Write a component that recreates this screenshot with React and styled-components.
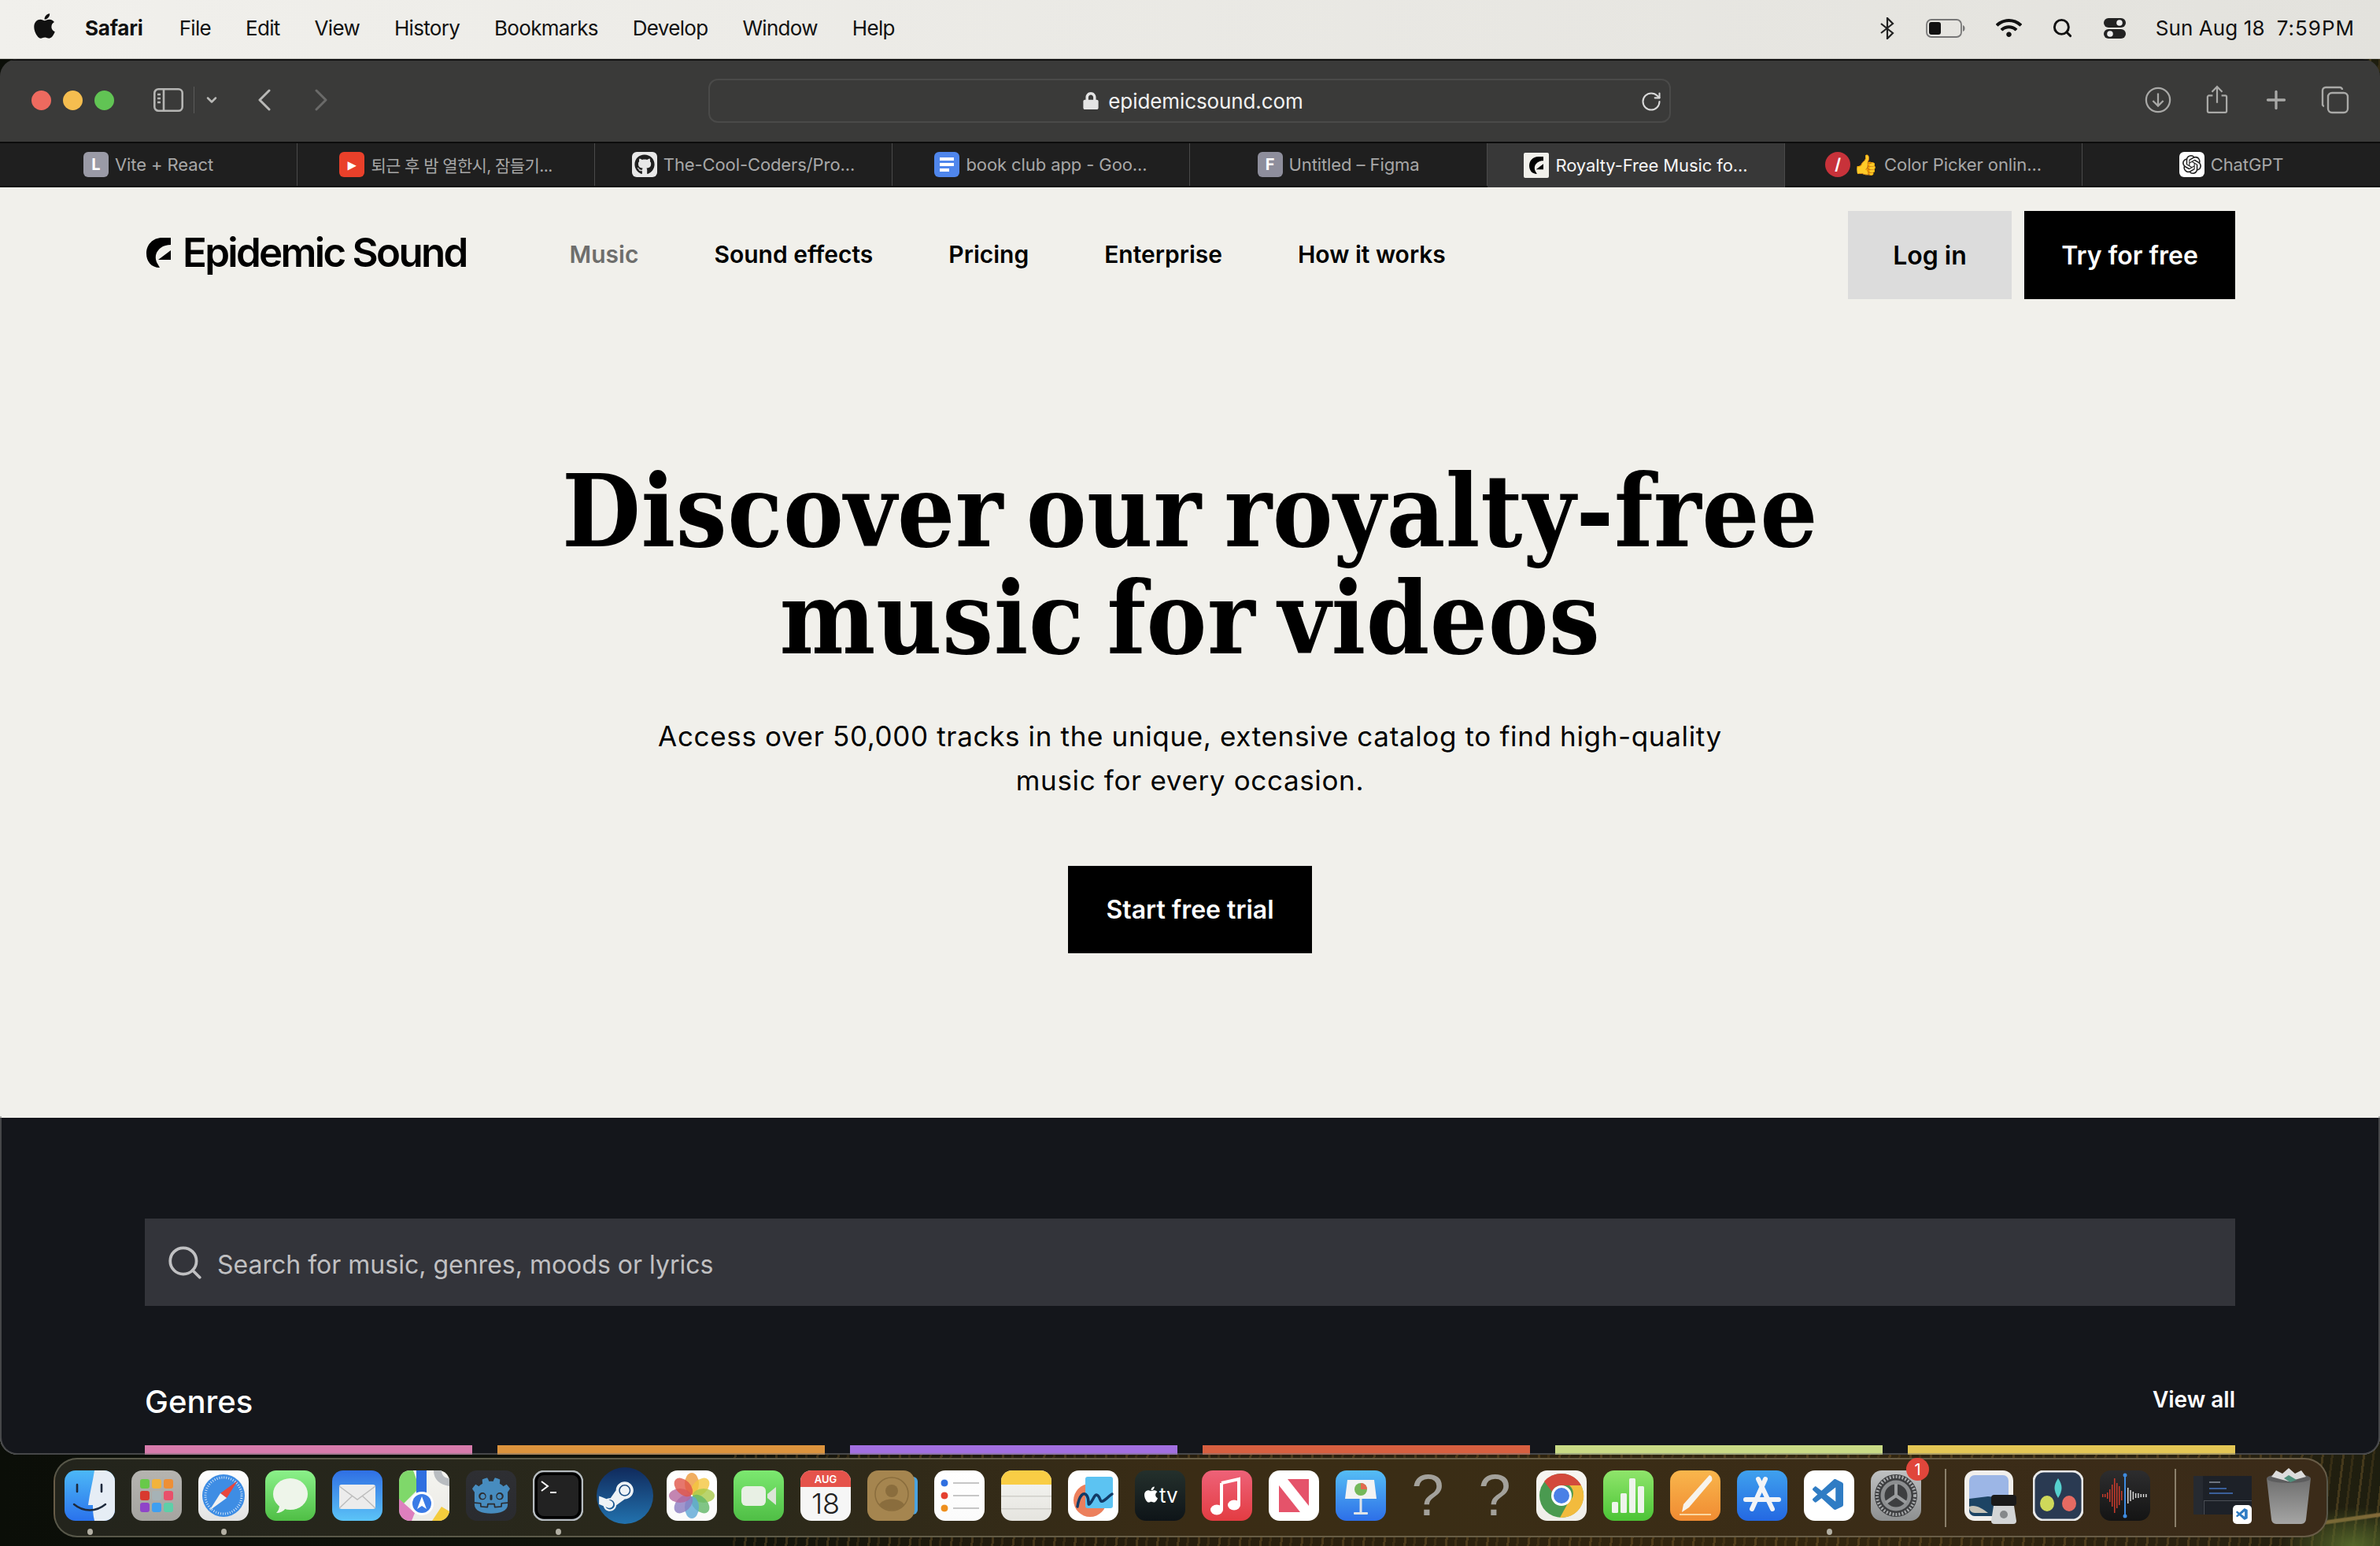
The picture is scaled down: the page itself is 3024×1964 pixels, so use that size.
import React from 'react';
import styled, { createGlobalStyle } from 'styled-components';
import { FaApple, FaGithub, FaLock, FaSteamSymbol, FaWifi } from 'react-icons/fa';
import { SiGodotengine, SiOpenai } from 'react-icons/si';
import { VscVscode } from 'react-icons/vsc';
import { ChevronDown, RotateCw, Search, Plus } from 'lucide-react';

const GlobalStyle = createGlobalStyle`
  html, body {
    margin: 0;
    padding: 0;
    background: #0c0f09;
  }
  * {
    box-sizing: border-box;
  }
`;

//desktop
const Screen = styled.div`
  position: relative;
  width: 3024px;
  height: 1964px;
  overflow: hidden;
  display: flex;
  flex-direction: column;
  font-family: Inter, 'Noto Sans', sans-serif;
  background:
    radial-gradient(ellipse 90px 50px at 2990px 1964px, #55662a 0%, transparent 100%),
    linear-gradient(172deg, transparent 1916px, #8a6a3c 1918px, #8a6a3c 1921px, transparent 1923px) no-repeat right / 100px 100%,
    repeating-linear-gradient(97deg, rgba(198, 150, 70, 0.22) 0 3px, transparent 3px 12px, rgba(120, 90, 40, 0.25) 12px 15px, transparent 15px 26px) no-repeat right / 2100px 100%,
    linear-gradient(90deg, #0b0e08 0%, #11130b 30%, #241c0d 45%, #33260f 75%, #2a2110 92%, #1e1e0f 100%);
`;

//menu bar
const MenuBar = styled.div`
  height: 75px;
  flex: none;
  display: flex;
  align-items: center;
  justify-content: space-between;
  padding: 0 32px 3px 41px;
  background: linear-gradient(90deg, #f1f0ec, #e3e2dd);
  border-bottom: 1px solid #c6c5c0;
  color: #111;
  font-size: 26px;
`;
const MenuLeft = styled.div`
  display: flex;
  align-items: center;
  gap: 44px;
  svg {
    width: 31px;
    height: 36px;
    margin: -6px -8px 0 0;
  }
`;
const MenuItem = styled.span`
  font-weight: ${p => (p.$bold ? 700 : 400)};
  letter-spacing: ${p => (p.$bold ? -0.2 : -0.7)}px;
  margin-right: ${p => (p.$bold ? 2 : 0)}px;
`;
const MenuRight = styled.div`
  display: flex;
  align-items: center;
`;
const Status = styled.span`
  display: flex;
  align-items: center;
  justify-content: center;
  width: ${p => p.$w}px;
  margin-right: ${p => p.$mr}px;
`;
const Clock = styled.span`
  display: flex;
  gap: 15px;
  font-size: 26px;
  letter-spacing: 0.1px;
`;
const ClockTime = styled.span`
  letter-spacing: 1px;
`;

//browser window
const Win = styled.div`
  position: relative;
  height: 1773px;
  flex: none;
  display: flex;
  flex-direction: column;
  overflow: hidden;
  border-radius: 22px;
  &::after {
    content: '';
    position: absolute;
    left: 0;
    right: 0;
    bottom: 0;
    height: 428px;
    border-radius: 0 0 22px 22px;
    border: 2px solid rgba(120, 120, 120, 0.5);
    border-top: none;
    pointer-events: none;
  }
`;
const Toolbar = styled.div`
  position: relative;
  height: 105px;
  flex: none;
  display: flex;
  align-items: center;
  padding-bottom: 3px;
  background: #3a3a39;
  border-top: 2px solid #111;
`;
const Lights = styled.div`
  display: flex;
  gap: 15px;
  margin-left: 40px;
`;
const Light = styled.span`
  width: 25px;
  height: 25px;
  border-radius: 50%;
  background: ${p => p.$c};
`;
const ToolIcons = styled.div`
  display: flex;
  align-items: center;
  margin-left: 50px;
  color: #b9b9b7;
`;
const ToolDivider = styled.span`
  width: 1px;
  height: 34px;
  margin: 0 12px 0 13px;
  background: #5b5b5a;
`;
const HistoryArrow = styled.svg`
  width: 18px;
  height: 28px;
  margin-left: ${p => p.$ml}px;
  fill: none;
  stroke: ${p => p.$c};
  stroke-width: 3;
  stroke-linecap: round;
  stroke-linejoin: round;
`;
const AddressBar = styled.div`
  position: absolute;
  left: 900px;
  top: 23px;
  width: 1223px;
  height: 56px;
  border: 2px solid #4a4a49;
  border-radius: 12px;
  display: flex;
  align-items: center;
  justify-content: center;
  gap: 11px;
  padding-left: 8px;
  color: #f2f2f2;
  font-size: 26px;
  letter-spacing: -0.1px;
`;
const Reload = styled.span`
  position: absolute;
  right: 9px;
  top: 13px;
  display: flex;
  color: #d8d8d8;
`;
const ToolRight = styled.div`
  position: absolute;
  top: 0;
  bottom: 3px;
  right: 20px;
  display: flex;
  align-items: center;
  color: #a9a9a7;
`;
const ToolButton = styled.span`
  width: 75px;
  display: flex;
  justify-content: center;
`;

//tabs
const TabBar = styled.div`
  height: 58px;
  flex: none;
  display: grid;
  grid-template-columns: repeat(8, 1fr);
  background: #1f1f1f;
  border-top: 2px solid #0c0c0c;
  border-bottom: 2px solid #0c0c0c;
`;
const Tab = styled.div`
  display: flex;
  align-items: center;
  justify-content: center;
  gap: 8px;
  font-size: 22px;
  white-space: nowrap;
  font-family: Inter, 'Noto Sans CJK KR', sans-serif;
  color: ${p => (p.$active ? '#f5f5f5' : '#a7a7a7')};
  background: ${p => (p.$active ? '#383838' : 'transparent')};
  border-right: 1px solid #4a4a4a;
  margin-bottom: ${p => (p.$active ? '-2px' : '0')};
  &:last-child {
    border-right: none;
  }
`;
const TabTitle = styled.span`
  font-size: ${p => (p.$cjk ? 21 : 22)}px;
  letter-spacing: ${p => (p.$cjk ? -0.6 : -0.1)}px;
`;
const Favicon = styled.span`
  width: 32px;
  height: 32px;
  flex: none;
  border-radius: ${p => p.$r || 6}px;
  background: ${p => p.$bg};
  color: ${p => p.$c || '#fff'};
  display: flex;
  align-items: center;
  justify-content: center;
  font-size: 20px;
  font-weight: 700;
`;
const MiniMark = styled.span`
  display: flex;
  svg {
    width: 18px;
    height: 22px;
  }
`;
const Thumb = styled.span`
  font-size: 25px;
  line-height: 30px;
  margin-left: -4px;
`;

//page
const Page = styled.div`
  flex: 1;
  min-height: 0;
  display: flex;
  flex-direction: column;
  background: #f1f0eb;
  color: #000;
`;
const Header = styled.header`
  height: 173px;
  flex: none;
  display: flex;
  align-items: flex-start;
  padding: 30px 184px 0 186px;
`;
const Logo = styled.div`
  display: flex;
  align-items: center;
  gap: 15px;
  margin: 23px 131px 0 0;
  svg {
    width: 31px;
    height: 38px;
  }
`;
const LogoText = styled.span`
  font-size: 51px;
  font-weight: 600;
  line-height: 60px;
  letter-spacing: -2.7px;
`;
const Nav = styled.nav`
  display: flex;
  gap: 96px;
  margin-top: 35px;
  flex: 1;
`;
const NavLink = styled.a`
  font-size: 30px;
  line-height: 40px;
  font-weight: 600;
  color: ${p => (p.$muted ? '#6e6e6c' : '#000')};
`;
const HeaderButtons = styled.div`
  display: flex;
  gap: 16px;
`;
const Button = styled.button`
  height: ${p => (p.$hero ? 111 : 112)}px;
  width: ${p => p.$w}px;
  border: none;
  border-radius: 0;
  background: ${p => (p.$light ? '#dcdcdc' : '#000')};
  color: ${p => (p.$light ? '#000' : '#fff')};
  font-family: Inter, sans-serif;
  font-size: 32px;
  font-weight: 600;
`;
const Hero = styled.section`
  flex: 1;
  display: flex;
  flex-direction: column;
  align-items: center;
  padding-top: 170px;
`;
const Title = styled.h1`
  margin: 0;
  text-align: center;
  font-family: 'DejaVu Serif Condensed', 'DejaVu Serif', serif;
  font-size: 128px;
  line-height: 136px;
  font-weight: 700;
  letter-spacing: 0.6px;
  word-spacing: -12px;
`;
const Lead = styled.p`
  margin: 54px 0 81px;
  width: 1400px;
  text-align: center;
  font-size: 35px;
  line-height: 56px;
  letter-spacing: 0.65px;
`;
const Dark = styled.section`
  flex: none;
  height: 428px;
  background: #14161b;
  padding: 128px 184px 0;
  color: #fff;
`;
const SearchBox = styled.div`
  height: 111px;
  display: flex;
  align-items: center;
  gap: 16px;
  padding-left: 26px;
  background: #33343a;
  color: #c0c0c2;
  font-size: 32px;
`;
const SearchText = styled.span`
  margin-top: 5px;
`;
const SectionRow = styled.div`
  display: flex;
  align-items: center;
  justify-content: space-between;
  height: 48px;
  margin: 97px 0 32px;
`;
const SectionTitle = styled.h2`
  margin: 0;
  font-size: 40px;
  font-weight: 500;
`;
const ViewAll = styled.a`
  margin-top: -5px;
  font-size: 28px;
  font-weight: 600;
`;
const Genres = styled.div`
  display: grid;
  grid-template-columns: repeat(6, 1fr);
  gap: 32px;
`;
const Genre = styled.div`
  height: 120px;
  background: ${p => p.$c};
`;

//dock
const Dock = styled.div`
  position: absolute;
  left: 68px;
  top: 1852px;
  width: 2890px;
  height: 101px;
  display: flex;
  align-items: center;
  border-radius: 30px;
  border: 2px solid rgba(210, 205, 180, 0.3);
  background: linear-gradient(90deg, #23241c 0%, #2b291b 30%, #3a2c15 50%, #3a2d15 60%, #3b2b19 100%);
  padding: 0 0 0 12px;
`;
const Slot = styled.div`
  position: relative;
  flex: none;
  width: ${p => p.$w || 64}px;
  height: 64px;
  margin-right: ${p => (p.$mr === undefined ? 21 : p.$mr)}px;
  margin-top: -5px;
  display: flex;
  align-items: ${p => (p.$start ? 'flex-start' : 'center')};
  justify-content: center;
  svg {
    display: block;
    flex: none;
  }
`;
const Dot = styled.span`
  position: absolute;
  left: 29px;
  top: 74px;
  width: 7px;
  height: 8px;
  border-radius: 50%;
  background: #b3b0a4;
`;
const DockDivider = styled.span`
  flex: none;
  width: 2px;
  height: 74px;
  margin: 0 ${p => p.$r}px 0 ${p => p.$l}px;
  background: #8a7f6a;
`;
const Unknown = styled.span`
  font-family: 'Liberation Sans', sans-serif;
  font-size: 74px;
  line-height: 64px;
  color: #a3a19b;
`;
const Badge = styled.span`
  position: absolute;
  top: -16px;
  right: -10px;
  width: 29px;
  height: 29px;
  border-radius: 50%;
  background: #e0463b;
  color: #fff;
  font-size: 20px;
  display: flex;
  align-items: center;
  justify-content: center;
`;

const Rounded = ({ id, from, to, fill }) => (
  <>
    <defs>
      <linearGradient id={id} x1='0' y1='0' x2='0' y2='1'>
        <stop offset='0' stopColor={from} />
        <stop offset='1' stopColor={to} />
      </linearGradient>
    </defs>
    <rect width='64' height='64' rx='14' fill={fill || `url(#${id})`} />
  </>
);

const Icon = ({ children, w = 64, h = 64 }) => (
  <svg width={w} height={h} viewBox={`0 0 ${w} ${h}`}>
    {children}
  </svg>
);

const Finder = () => (
  <Icon>
    <Rounded id='fi' from='#4cb8f7' to='#2a72ec' />
    <path d='M38 0H50a14 14 0 0 1 14 14V50a14 14 0 0 1-14 14H38C36 56 36 50 36 44H30C32 28 36 14 38 0Z' fill='#e6edf5' />
    <path d='M16 18v9M47 18v9' stroke='#1d2a3d' strokeWidth='2.6' strokeLinecap='round' />
    <path d='M12 43c12 10 28 10 40 0' stroke='#1d2a3d' strokeWidth='2.4' fill='none' strokeLinecap='round' />
  </Icon>
);
const Launchpad = () => (
  <Icon>
    <Rounded id='la' from='#b5b4b0' to='#a5a4a0' />
    {['#68c94a', '#f2b33c', '#ee8f35', '#d8392f', '#a6b2b6', '#e9506a', '#8f45c8', '#3f9ff0', '#5ecfa8'].map((c, i) => (
      <rect key={c} x={11 + (i % 3) * 15} y={11 + Math.floor(i / 3) * 15} width='12' height='12' rx='3' fill={c} />
    ))}
  </Icon>
);
const Safari = () => (
  <Icon>
    <Rounded id='sa' from='#fff' to='#e2e2e2' />
    <circle cx='32' cy='32' r='27' fill='#3e8de4' />
    <circle cx='32' cy='32' r='23' fill='none' stroke='#cfe3f8' strokeWidth='3' strokeDasharray='1 2' />
    <path d='M50 13L28 29l8 6z' fill='#e8463c' />
    <path d='M14 51l22-16-8-6z' fill='#f1f1f1' />
  </Icon>
);
const Messages = () => (
  <Icon>
    <Rounded id='me' from='#8bf18a' to='#4fbe45' />
    <ellipse cx='32' cy='30' rx='22' ry='20' fill='#eef5ea' />
    <path d='M18 44c0 5-2 8-4 10 5 0 9-2 12-6z' fill='#eef5ea' />
  </Icon>
);
const Mail = () => (
  <Icon>
    <Rounded id='ma' from='#2f6fe4' to='#5cc4f7' />
    <rect x='9' y='18' width='46' height='31' rx='3' fill='#ececec' />
    <path d='M9 20l23 17 23-17M9 48l17-16M55 48L38 32' stroke='#bdbdbd' strokeWidth='1.5' fill='none' />
  </Icon>
);
const Maps = () => (
  <Icon>
    <Rounded id='mp' from='#f4f4f0' to='#ecebe6' />
    <path d='M0 14A14 14 0 0 1 14 0H18L26 22 0 48z' fill='#7fd86a' />
    <path d='M0 36L20 54 16 64H14A14 14 0 0 1 0 50z' fill='#dd7fbe' />
    <path d='M42 64L54 46 64 52A14 14 0 0 1 50 64z' fill='#f4cc3c' />
    <rect x='22' y='0' width='13' height='34' fill='#2f6fe0' />
    <path d='M44 0c0 12 8 18 20 20V10C58 10 54 6 54 0z' fill='#b8bcc0' />
    <circle cx='29' cy='42' r='15' fill='#fff' />
    <circle cx='29' cy='42' r='12' fill='#3a7be6' />
    <path d='M29 33l-6 16 6-4 6 4z' fill='#fff' />
  </Icon>
);
const Godot = () => (
  <Icon>
    <Rounded id='go' from='#2e2f33' to='#2a2b2f' />
    <g transform='translate(8 8)'>
      <SiGodotengine size={48} color='#478cbf' />
    </g>
  </Icon>
);
const Terminal = () => (
  <Icon>
    <rect x='1' y='1' width='62' height='62' rx='13' fill='#000' stroke='#b6bcc0' strokeWidth='2.5' />
    <rect x='6' y='6' width='52' height='52' rx='8' fill='#222' />
    <path d='M11 14l8 6-8 6' stroke='#fff' strokeWidth='2' fill='none' />
    <path d='M22 28h8' stroke='#fff' strokeWidth='2' />
  </Icon>
);
const Steam = () => (
  <Icon w={72} h={72}>
    <defs>
      <linearGradient id='st' x1='0' y1='0' x2='0' y2='1'>
        <stop offset='0' stopColor='#102a5c' />
        <stop offset='1' stopColor='#2272ae' />
      </linearGradient>
    </defs>
    <circle cx='36' cy='36' r='36' fill='url(#st)' />
    <g transform='translate(0 12)'>
      <FaSteamSymbol size={50} color='#eef3f6' x='0' y='0' />
    </g>
  </Icon>
);
const Photos = () => (
  <Icon>
    <Rounded id='ph' from='#fff' to='#fafafa' />
    {['#ee9a3a', '#f4c63e', '#a8c94a', '#62b768', '#5da7d6', '#8a7cc0', '#b4669e', '#e05548'].map((c, i) => (
      <ellipse key={c} cx='32' cy='17' rx='9' ry='14' fill={c} opacity='0.8' transform={`rotate(${i * 45} 32 32)`} />
    ))}
  </Icon>
);
const FaceTime = () => (
  <Icon>
    <Rounded id='ft' from='#7ce870' to='#4fbe45' />
    <rect x='10' y='20' width='31' height='25' rx='6' fill='#e8f0e4' />
    <path d='M43 30l11-9v23l-11-9z' fill='#dbe5d7' />
  </Icon>
);
const Calendar = () => (
  <Icon>
    <Rounded id='ca' fill='#f6f6f6' from='#fff' to='#fff' />
    <path d='M0 21V14A14 14 0 0 1 14 0H50A14 14 0 0 1 64 14V21z' fill='#e5534b' />
    <text x='32' y='16' textAnchor='middle' fontFamily='Inter' fontSize='13' fontWeight='600' fill='#fff'>AUG</text>
    <text x='32' y='55' textAnchor='middle' fontFamily='Inter' fontSize='36' fontWeight='300' fill='#222'>18</text>
  </Icon>
);
const Contacts = () => (
  <Icon>
    <rect x='50' y='8' width='14' height='48' rx='6' fill='#4aa3e0' />
    <rect width='60' height='64' rx='14' fill='#a5854f' />
    <circle cx='31' cy='30' r='21' fill='none' stroke='#8a6d3d' strokeWidth='1.5' />
    <circle cx='31' cy='26' r='8' fill='#8a6d3d' />
    <path d='M15 44c4-10 28-10 32 0-8 8-24 8-32 0z' fill='#8a6d3d' />
  </Icon>
);
const Reminders = () => (
  <Icon>
    <Rounded id='re' from='#fff' to='#fbfbfb' />
    {['#2f6fe0', '#e5402f', '#ee8f1e'].map((c, i) => (
      <g key={c}>
        <circle cx='13' cy={16 + i * 16} r='5' fill={c} stroke='#fff' strokeWidth='1' />
        <rect x='24' y={15 + i * 16} width='33' height='2' fill='#c6c6c6' />
      </g>
    ))}
  </Icon>
);
const Notes = () => (
  <Icon>
    <Rounded id='no' from='#f6f6f3' to='#e5e4df' />
    <path d='M0 18V14A14 14 0 0 1 14 0H50A14 14 0 0 1 64 14V18z' fill='#f9cd45' />
    <rect y='32' width='64' height='1.5' fill='#d0cfca' />
    <rect y='48' width='64' height='1.5' fill='#d0cfca' />
  </Icon>
);
const Freeform = () => (
  <Icon>
    <Rounded id='fr' from='#fff' to='#fff' />
    <circle cx='28' cy='38' r='21' fill='#ec7f5c' />
    <rect x='22' y='8' width='35' height='40' rx='3' fill='#5cc3f2' />
    <path d='M12 46c2-14 8-20 12-14s0 14 4 10 6-14 10-10 2 10 8 6 6-6 10-8' stroke='#123a66' strokeWidth='3.5' fill='none' strokeLinecap='round' />
  </Icon>
);
const AppleTv = () => (
  <Icon>
    <Rounded id='tv' from='#24302c' to='#0e1418' />
    <g transform='translate(9 19)'>
      <FaApple size={23} color='#fff' />
    </g>
    <text x='31' y='41' fontFamily='Inter' fontSize='26' fontWeight='400' fill='#fff'>tv</text>
  </Icon>
);
const Music = () => (
  <Icon>
    <Rounded id='mu' from='#ee6278' to='#e33c42' />
    <path d='M25 16l22-5v32' fill='none' stroke='#fff' strokeWidth='4' />
    <path d='M25 16v34' stroke='#fff' strokeWidth='4' />
    <ellipse cx='19' cy='50' rx='8' ry='6.5' fill='#fff' />
    <ellipse cx='41' cy='44' rx='8' ry='6.5' fill='#fff' />
  </Icon>
);
const News = () => (
  <Icon>
    <Rounded id='ne' from='#fff' to='#fff' />
    <rect x='13' y='11' width='38' height='42' fill='#e5536a' />
    <path d='M13 11h11l27 34v8H40L13 19z' fill='#fff' />
  </Icon>
);
const Keynote = () => (
  <Icon>
    <Rounded id='ke' from='#55bdf5' to='#2d6fe8' />
    <path d='M15 12h34l3 24H12z' fill='#f3f3f3' />
    <circle cx='32' cy='24' r='8' fill='#75b85a' />
    <path d='M32 24V16a8 8 0 0 1 8 8z' fill='#e36a4f' />
    <rect x='30.5' y='36' width='3' height='18' fill='#dfe3e8' />
    <rect x='23' y='53' width='18' height='3' rx='1' fill='#dfe3e8' />
  </Icon>
);
const Chrome = () => (
  <Icon>
    <Rounded id='ch' from='#f7f6f2' to='#efeee9' />
    <circle cx='32' cy='32' r='28' fill='#4a9a50' />
    <path d='M32 4a28 28 0 0 1 25 15H32A13 13 0 0 0 20 27L10 14A28 28 0 0 1 32 4z' fill='#d34a3c' />
    <path d='M57 19a28 28 0 0 1-27 41l11-20A13 13 0 0 0 42 19z' fill='#f2bb3d' />
    <circle cx='32' cy='32' r='13' fill='#fff' />
    <circle cx='32' cy='32' r='10' fill='#4a80e6' />
  </Icon>
);
const Numbers = () => (
  <Icon>
    <Rounded id='nu' from='#8fe56b' to='#4cc436' />
    {[[11, 40], [22, 29], [33, 10], [44, 20]].map(([x, y]) => (
      <rect key={x} x={x} y={y} width='8' height={54 - y} rx='1.5' fill='#eef4ec' />
    ))}
  </Icon>
);
const Pages = () => (
  <Icon>
    <Rounded id='pa' from='#f9b64c' to='#f08b32' />
    <path d='M50 6c3 1 4 4 3 7L24 47l-9 6 2-10z' fill='#f7f3ec' />
    <rect x='12' y='55' width='40' height='2' fill='#fbd7a0' />
  </Icon>
);
const AppStore = () => (
  <Icon>
    <Rounded id='ap' from='#3fa1ee' to='#2468e2' />
    <path d='M36 11L19 49M27 11l18 38M11 37h42' stroke='#f2f4f7' strokeWidth='6' strokeLinecap='round' fill='none' />
  </Icon>
);
const VsCode = () => (
  <Icon>
    <Rounded id='vs' from='#fff' to='#fff' />
    <g transform='translate(8 8)'>
      <VscVscode size={48} color='#2f7cc4' />
    </g>
  </Icon>
);
const SystemPrefs = () => (
  <Icon>
    <Rounded id='sy' from='#bfc1c2' to='#8d8f90' />
    <circle cx='32' cy='32' r='27' fill='#3d3e40' />
    <circle cx='32' cy='32' r='24' fill='none' stroke='#a9abad' strokeWidth='4' strokeDasharray='2 2' />
    <circle cx='32' cy='32' r='17' fill='none' stroke='#8c8e90' strokeWidth='5' />
    <path d='M32 32V17M32 32L19 41M32 32l13 9' stroke='#9a9c9e' strokeWidth='4' />
  </Icon>
);
const Preview = () => (
  <Icon w={68} h={68}>
    <rect x='0' y='0' width='62' height='64' rx='13' fill='#f1efec' />
    <rect x='6' y='6' width='50' height='52' rx='7' fill='#9cb6e6' />
    <path d='M6 36l24-3 26 3v15a7 7 0 0 1-7 7H13a7 7 0 0 1-7-7z' fill='#1d4464' />
    <path d='M6 46c8-3 16 2 24 8H13a7 7 0 0 1-7-7z' fill='#c6c3b8' />
    <rect x='34' y='31' width='32' height='14' rx='4' fill='#1a1a1a' />
    <path d='M37 45h26l3 19a4 4 0 0 1-4 4H38a4 4 0 0 1-4-4z' fill='#d3d5d6' />
    <circle cx='50' cy='56' r='5' fill='#85888a' />
  </Icon>
);
const Davinci = () => (
  <Icon>
    <rect x='1' y='1' width='62' height='62' rx='13' fill='#2a3a52' stroke='#e8e8e8' strokeWidth='3' />
    <path d='M32 10c6 9 6 15 0 25-6-10-6-16 0-25z' fill='#55d0cd' />
    <ellipse cx='18' cy='42' rx='9' ry='10' fill='#cfd85a' />
    <ellipse cx='46' cy='42' rx='9' ry='10' fill='#e66a62' />
  </Icon>
);
const VoiceMemos = () => (
  <Icon>
    <Rounded id='vo' from='#2d2d2e' to='#141414' />
    {[2, 2, 4, 8, 14, 22, 16, 12, 6].map((h, i) => (
      <rect key={i} x={3 + i * 3} y={32 - h} width='1.5' height={h * 2} fill='#c83a2c' />
    ))}
    {[10, 7, 5, 3, 3, 2, 2, 2].map((h, i) => (
      <rect key={i} x={35 + i * 3.3} y={32 - h} width='1.5' height={h * 2} fill='#d8d8d8' />
    ))}
    <rect x='31' y='5' width='2' height='54' fill='#3d8be0' />
    <circle cx='32' cy='6' r='2.5' fill='#3d8be0' />
    <circle cx='32' cy='58' r='2.5' fill='#3d8be0' />
  </Icon>
);
const WindowThumb = () => (
  <Icon w={76} h={68}>
    <rect x='0' y='7' width='74' height='49' fill='#1d2128' />
    <rect x='0' y='7' width='12' height='49' fill='#262a31' />
    <rect x='20' y='14' width='14' height='2' fill='#6e7580' />
    <rect x='20' y='22' width='22' height='2' fill='#3a5f9a' />
    <rect x='20' y='28' width='30' height='2' fill='#3a5f9a' />
    <rect x='13' y='38' width='61' height='1' fill='#4b4f56' />
    <rect x='13' y='38' width='1' height='18' fill='#4b4f56' />
    <rect x='50' y='44' width='24' height='24' rx='5' fill='#fff' />
    <g transform='translate(53 47)'>
      <VscVscode size={18} color='#2f7cc4' />
    </g>
  </Icon>
);
const Trash = () => (
  <Icon w={60} h={72}>
    <defs>
      <linearGradient id='tr' x1='0' y1='0' x2='0' y2='1'>
        <stop offset='0' stopColor='#6f6f6f' />
        <stop offset='1' stopColor='#a5a5a4' />
      </linearGradient>
    </defs>
    <path d='M2 14h56l-6 52a6 6 0 0 1-6 6H14a6 6 0 0 1-6-6z' fill='url(#tr)' />
    <ellipse cx='30' cy='14' rx='28' ry='6' fill='#5d5d5e' />
    <path d='M8 12l6-8 8 4 8-7 8 7 8-4 6 8-22 6z' fill='#dcdcdc' />
    <path d='M24 14l6-4 10 6-8 3z' fill='#4f8f7c' />
  </Icon>
);

const SidebarGlyph = () => (
  <svg width='38' height='30' viewBox='0 0 38 30' fill='none' stroke='#b5b5b3' strokeWidth='2.6'>
    <rect x='1.3' y='1.3' width='35.4' height='27.4' rx='5' />
    <path d='M13 2v26' />
    <path d='M5 8h4M5 13h4M5 18h4' />
  </svg>
);
const DownloadGlyph = () => (
  <svg width='34' height='34' viewBox='0 0 36 36' fill='none' stroke='#a9a9a7' strokeWidth='2.4'>
    <circle cx='18' cy='18' r='16' />
    <path d='M18 9v17M11 19l7 7 7-7' />
  </svg>
);
const ShareGlyph = () => (
  <svg width='28' height='38' viewBox='0 0 30 38' fill='none' stroke='#a9a9a7' strokeWidth='2.4'>
    <path d='M9 13H4a2 2 0 0 0-2 2v19a2 2 0 0 0 2 2h22a2 2 0 0 0 2-2V15a2 2 0 0 0-2-2h-5' />
    <path d='M15 23V2M8 8l7-7 7 7' />
  </svg>
);
const TabsGlyph = () => (
  <svg width='36' height='36' viewBox='0 0 36 36' fill='none' stroke='#a9a9a7' strokeWidth='2.4'>
    <rect x='9' y='9' width='25' height='25' rx='5' />
    <path d='M4 26a2.5 2.5 0 0 1-2-3V6a4 4 0 0 1 4-4h18a3 3 0 0 1 3 3' />
  </svg>
);
const BluetoothGlyph = () => (
  <svg width='20' height='28' viewBox='0 0 20 28' fill='none' stroke='#222' strokeWidth='2.2'>
    <path d='M2 8l15 12-7 7V1l7 7L2 20' />
  </svg>
);
const BatteryGlyph = () => (
  <svg width='50' height='24' viewBox='0 0 50 24'>
    <rect x='1' y='1' width='44' height='22' rx='6' fill='none' stroke='#777' strokeWidth='1.8' />
    <rect x='4' y='4' width='15' height='16' rx='3' fill='#111' />
    <path d='M47 8c2 1 2.5 2 2.5 4s-.5 3-2.5 4z' fill='#777' />
  </svg>
);
const ControlGlyph = () => (
  <svg width='28' height='26' viewBox='0 0 28 26'>
    <rect x='0' y='0' width='28' height='12' rx='6' fill='#222' />
    <circle cx='20' cy='6' r='3.8' fill='#eee' />
    <rect x='0' y='14' width='28' height='12' rx='6' fill='#222' />
    <circle cx='8' cy='20' r='3.8' fill='#eee' />
  </svg>
);
const DocsGlyph = () => (
  <svg width='30' height='30' viewBox='0 0 30 30' fill='#fff'>
    <rect x='6' y='6' width='18' height='4' />
    <rect x='6' y='13' width='18' height='4' />
    <rect x='6' y='20' width='12' height='4' />
  </svg>
);
const LogoMark = () => (
  <svg viewBox='0 0 31 38' fill='currentColor'>
    <path d='M31 0H20C8 0 0 9 0 20c0 10 6 18 17 18l-4-7c-3-8 0-14 5-18 4-3 8-4 13-4z' />
    <path d='M15 28L31 16v12z' />
  </svg>
);

const menuItems = ['File', 'Edit', 'View', 'History', 'Bookmarks', 'Develop', 'Window', 'Help'];
const navLinks = ['Sound effects', 'Pricing', 'Enterprise', 'How it works'];
const genreColors = ['#d77bac', '#dc933d', '#a26fe0', '#d75f40', '#c9da85', '#e3c655'];

const tabs = [
  { title: 'Vite + React', icon: <Favicon $bg='#9a9aa6'>L</Favicon> },
  { title: '퇴근 후 밤 열한시, 잠들기...', cjk: true, icon: <Favicon $bg='#e9402a'>▸</Favicon> },
  { title: 'The-Cool-Coders/Pro...', icon: <Favicon $bg='#e8e8e8' $c='#1f1f1f'><FaGithub size={26} /></Favicon> },
  { title: 'book club app - Goo...', icon: <Favicon $bg='#4f86ec'><DocsGlyph /></Favicon> },
  { title: 'Untitled – Figma', icon: <Favicon $bg='#8e8e9c'>F</Favicon> },
  { title: 'Royalty-Free Music fo...', active: true, icon: <Favicon $bg='#f1f0eb' $c='#000' $r={2}><MiniMark><LogoMark /></MiniMark></Favicon> },
  { title: 'Color Picker onlin...', icon: <><Favicon $bg='#c8323a' $r={16}>/</Favicon><Thumb>👍</Thumb></> },
  { title: 'ChatGPT', icon: <Favicon $bg='#fff' $c='#222'><SiOpenai size={24} /></Favicon> },
];

const dockApps = [
  { Glyph: Finder, dot: true }, { Glyph: Launchpad }, { Glyph: Safari, dot: true }, { Glyph: Messages },
  { Glyph: Mail }, { Glyph: Maps }, { Glyph: Godot }, { Glyph: Terminal, dot: true }, { Glyph: Steam },
  { Glyph: Photos }, { Glyph: FaceTime }, { Glyph: Calendar }, { Glyph: Contacts }, { Glyph: Reminders },
  { Glyph: Notes }, { Glyph: Freeform }, { Glyph: AppleTv }, { Glyph: Music }, { Glyph: News }, { Glyph: Keynote },
];
const dockAppsAfter = [
  { Glyph: Chrome }, { Glyph: Numbers }, { Glyph: Pages }, { Glyph: AppStore }, { Glyph: VsCode, dot: true },
];

const App = () => {
  return (
    <Screen>
      <GlobalStyle />
      <MenuBar>
        <MenuLeft>
          <FaApple />
          <MenuItem $bold>Safari</MenuItem>
          {menuItems.map(item => (
            <MenuItem key={item}>{item}</MenuItem>
          ))}
        </MenuLeft>
        <MenuRight>
          <Status $w={22} $mr={38}><BluetoothGlyph /></Status>
          <Status $w={50} $mr={38}><BatteryGlyph /></Status>
          <Status $w={36} $mr={36}><FaWifi size={33} /></Status>
          <Status $w={28} $mr={38}><Search size={27} strokeWidth={2.6} /></Status>
          <Status $w={28} $mr={38}><ControlGlyph /></Status>
          <Clock><span>Sun Aug 18</span><ClockTime>7:59PM</ClockTime></Clock>
        </MenuRight>
      </MenuBar>

      <Win>
        <Toolbar>
          <Lights>
            <Light $c='#ee6a5f' />
            <Light $c='#f5bd4f' />
            <Light $c='#61c454' />
          </Lights>
          <ToolIcons>
            <SidebarGlyph />
            <ToolDivider />
            <ChevronDown size={20} strokeWidth={3} />
            <HistoryArrow viewBox='0 0 18 28' $ml={48} $c='#b9b9b7'><path d='M15 2L3 14l12 12' /></HistoryArrow>
            <HistoryArrow viewBox='0 0 18 28' $ml={54} $c='#6a6a69'><path d='M3 2l12 12L3 26' /></HistoryArrow>
          </ToolIcons>
          <AddressBar>
            <FaLock size={22} color='#e4e4e4' />
            <span>epidemicsound.com</span>
            <Reload><RotateCw size={28} strokeWidth={1.8} /></Reload>
          </AddressBar>
          <ToolRight>
            <ToolButton><DownloadGlyph /></ToolButton>
            <ToolButton><ShareGlyph /></ToolButton>
            <ToolButton><Plus size={36} strokeWidth={2.2} /></ToolButton>
            <ToolButton><TabsGlyph /></ToolButton>
          </ToolRight>
        </Toolbar>
        <TabBar>
          {tabs.map(tab => (
            <Tab key={tab.title} $active={tab.active}>
              {tab.icon}
              <TabTitle $cjk={tab.cjk}>{tab.title}</TabTitle>
            </Tab>
          ))}
        </TabBar>
        <Page>
          <Header>
            <Logo>
              <LogoMark />
              <LogoText>Epidemic Sound</LogoText>
            </Logo>
            <Nav>
              <NavLink $muted>Music</NavLink>
              {navLinks.map(link => (
                <NavLink key={link}>{link}</NavLink>
              ))}
            </Nav>
            <HeaderButtons>
              <Button $light $w={208}>Log in</Button>
              <Button $w={268}>Try for free</Button>
            </HeaderButtons>
          </Header>
          <Hero>
            <Title>
              Discover our royalty-free
              <br />
              music for videos
            </Title>
            <Lead>
              Access over 50,000 tracks in the unique, extensive catalog to find high-quality music for every occasion.
            </Lead>
            <Button $hero $w={310}>Start free trial</Button>
          </Hero>
          <Dark>
            <SearchBox>
              <Search size={50} strokeWidth={1.8} />
              <SearchText>Search for music, genres, moods or lyrics</SearchText>
            </SearchBox>
            <SectionRow>
              <SectionTitle>Genres</SectionTitle>
              <ViewAll>View all</ViewAll>
            </SectionRow>
            <Genres>
              {genreColors.map(c => (
                <Genre key={c} $c={c} />
              ))}
            </Genres>
          </Dark>
        </Page>
      </Win>

      <Dock>
        {dockApps.map(({ Glyph, dot }, i) => (
          <Slot key={i}>
            <Glyph />
            {dot && <Dot />}
          </Slot>
        ))}
        <Slot><Unknown>?</Unknown></Slot>
        <Slot><Unknown>?</Unknown></Slot>
        {dockAppsAfter.map(({ Glyph, dot }, i) => (
          <Slot key={i}>
            <Glyph />
            {dot && <Dot />}
          </Slot>
        ))}
        <Slot $mr={0}>
          <SystemPrefs />
          <Badge>1</Badge>
        </Slot>
        <DockDivider $l={30} $r={25} />
        <Slot $start><Preview /></Slot>
        <Slot><Davinci /></Slot>
        <Slot $mr={0}><VoiceMemos /></Slot>
        <DockDivider $l={31} $r={22} />
        <Slot $w={76} $mr={15} $start><WindowThumb /></Slot>
        <Slot $w={60} $mr={0}><Trash /></Slot>
      </Dock>
    </Screen>
  );
};

export default App;
